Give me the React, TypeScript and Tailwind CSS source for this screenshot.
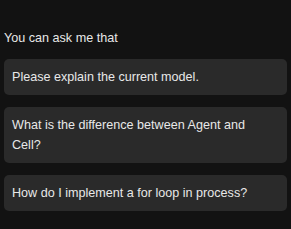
const questions = [
  "Please explain the current model.",
  "What is the difference between Agent and Cell?",
  "How do I implement a for loop in process?",
];

export default function App() {
  return (
    <div
      className="h-[229px] w-[291px] overflow-hidden bg-[#121212] px-1 pt-[28px] text-[12.6px] leading-[20px] text-[#e8e8e8]"
      style={{ fontFamily: '"Liberation Sans", Arial, sans-serif' }}
    >
      <p className="mb-[11px]">You can ask me that</p>
      <div className="flex flex-col gap-3">
        {questions.map((q) => (
          <button
            key={q}
            type="button"
            className="rounded-[5px] bg-[#2a2a2a] py-2 pl-2 pr-5 text-left text-[#e8e8e8]"
          >
            {q}
          </button>
        ))}
      </div>
    </div>
  );
}
